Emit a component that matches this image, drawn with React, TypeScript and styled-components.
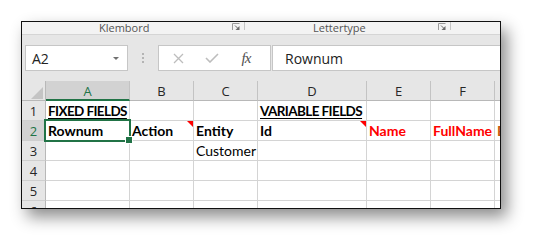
import * as React from 'react'
import styled, { createGlobalStyle } from 'styled-components'

const Global = createGlobalStyle`
  * {
    box-sizing: border-box;
  }
  body {
    margin: 0;
    padding: 0;
    background: #fff;
    font-family: "Open Sans", "Noto Sans", sans-serif;
  }
`

const green = '#217346'
const grid = '#d4d4d4'

const Page = styled.div`
  padding: 21px 0 0 21px;
  height: 251px;
`

const Window = styled.div`
  width: 480px;
  height: 188px;
  border: 1px solid #111;
  background: #e6e6e6;
  box-shadow: 6px 8px 15px rgba(0, 0, 0, 0.45);
  overflow: hidden;
  display: flex;
  flex-direction: column;
`

/* ribbon group labels, only the bottom strip is visible */
const RibbonStrip = styled.div`
  height: 13px;
  flex: none;
  display: flex;
  background: #f3f3f3;
  border-bottom: 1px solid #d5d5d5;
`

const Group = styled.div<{ $w: number; $labelAt: number }>`
  width: ${p => p.$w}px;
  flex: none;
  display: flex;
  align-items: flex-start;
  padding-left: ${p => p.$labelAt}px;
`

const GroupLabel = styled.span`
  font-size: 11px;
  line-height: 11px;
  color: #555;
  white-space: nowrap;
`

const Launcher = styled.svg`
  margin-left: auto;
  margin-top: 1px;
  flex: none;
`

const GroupSep = styled.div`
  width: 1px;
  height: 8px;
  background: #c6c6c6;
  margin-left: 4px;
  flex: none;
`

const FormulaBar = styled.div`
  height: 46px;
  flex: none;
  display: flex;
  align-items: center;
  padding-left: 3px;
`

const NameBox = styled.div`
  width: 103px;
  height: 26px;
  flex: none;
  background: #fff;
  border: 1px solid #c6c6c6;
  display: flex;
  align-items: center;
  padding: 0 8px 0 6px;
  font-size: 14px;
  color: #222;
`

const Caret = styled.span`
  margin-left: auto;
  width: 0;
  height: 0;
  border-left: 3px solid transparent;
  border-right: 3px solid transparent;
  border-top: 3px solid #707070;
`

const Grip = styled.div`
  width: 30px;
  flex: none;
  display: flex;
  flex-direction: column;
  align-items: center;
  gap: 2px;
  & > i {
    width: 2px;
    height: 2px;
    background: #b4b4b4;
  }
`

const FxBox = styled.div`
  width: 113px;
  height: 26px;
  flex: none;
  background: #fff;
  border: 1px solid #c6c6c6;
  display: flex;
  align-items: center;
  padding-left: 2px;
`

const FxSlot = styled.div`
  width: 34px;
  display: flex;
  justify-content: center;
  align-items: center;
`

const FxText = styled.span`
  font-family: "Liberation Serif", serif;
  font-style: italic;
  font-size: 15px;
  color: #505050;
  letter-spacing: -1px;
`

const FormulaInput = styled.div`
  flex: 1;
  height: 26px;
  margin-left: 1px;
  margin-right: -10px;
  background: #fff;
  border: 1px solid #c6c6c6;
  display: flex;
  align-items: center;
  padding-left: 12px;
  font-size: 14px;
  color: #222;
`

const Sheet = styled.div`
  flex: 1;
  background: #fff;
  overflow: hidden;
  display: grid;
  grid-template-columns: 24px 84px 64px 64px 109px 64px 64px 64px;
  grid-auto-rows: 20px;
`

const Corner = styled.div`
  background: #e6e6e6;
  border-right: 1px solid #b8b8b8;
  border-bottom: 1px solid #b8b8b8;
  display: flex;
  justify-content: flex-end;
  align-items: flex-end;
  padding: 0 2px 1px 0;
  & > i {
    width: 0;
    height: 0;
    border-left: 12px solid transparent;
    border-bottom: 12px solid #c4c4c4;
  }
`

const ColHeader = styled.div<{ $active?: boolean }>`
  background: ${p => (p.$active ? '#d2d2d2' : '#e6e6e6')};
  color: ${p => (p.$active ? green : '#262626')};
  border-right: 1px solid #c3c3c3;
  border-bottom: ${p => (p.$active ? `2px solid ${green}` : '1px solid #b8b8b8')};
  font-size: 13px;
  display: flex;
  align-items: center;
  justify-content: center;
  padding-top: ${p => (p.$active ? 1 : 0)}px;
`

const RowHeader = styled.div<{ $active?: boolean }>`
  background: ${p => (p.$active ? '#d2d2d2' : '#e6e6e6')};
  color: ${p => (p.$active ? green : '#262626')};
  border-right: 1px solid #b8b8b8;
  border-bottom: 1px solid #cfcfcf;
  font-size: 13px;
  display: flex;
  align-items: center;
  justify-content: center;
  padding-top: 1px;
`

const Cell = styled.div<{
  $bold?: boolean
  $under?: boolean
  $color?: string
  $comment?: boolean
}>`
  position: relative;
  border-right: 1px solid ${grid};
  border-bottom: 1px solid ${grid};
  font-family: Lato, "Open Sans", sans-serif;
  font-size: ${p => (p.$under ? 13.5 : 14)}px;
  letter-spacing: ${p => (p.$under ? -0.6 : 0)}px;
  line-height: 16px;
  font-weight: ${p => (p.$bold ? 700 : 400)};
  color: ${p => p.$color || '#000'};
  text-decoration: ${p => (p.$under ? 'underline' : 'none')};
  text-decoration-thickness: 1px;
  text-underline-offset: 2px;
  white-space: nowrap;
  overflow: ${p => (p.$under ? 'visible' : 'hidden')};
  display: flex;
  align-items: flex-end;
  padding: 0 2px 1px;
  &::after {
    content: '';
    display: ${p => (p.$comment ? 'block' : 'none')};
    position: absolute;
    top: 0;
    right: 0;
    border-top: 6px solid #f00;
    border-left: 6px solid transparent;
  }
`

const ActiveWrap = styled.div`
  position: relative;
`

const Selection = styled.div`
  position: absolute;
  left: -2px;
  top: -2px;
  right: -1px;
  bottom: -1px;
  border: 2px solid ${green};
  pointer-events: none;
  z-index: 2;
  &::after {
    content: '';
    position: absolute;
    right: -4px;
    bottom: -4px;
    width: 6px;
    height: 6px;
    background: ${green};
    border: 1px solid #fff;
  }
`

type CellData = {
  text?: string
  bold?: boolean
  under?: boolean
  color?: string
  comment?: boolean
}

const red = '#ff0000'

const rows: CellData[][] = [
  [
    { text: 'FIXED FIELDS', bold: true, under: true },
    {},
    {},
    { text: 'VARIABLE FIELDS', bold: true, under: true },
    {},
    {},
    {},
  ],
  [
    { text: 'Rownum', bold: true },
    { text: 'Action', bold: true, comment: true },
    { text: 'Entity', bold: true },
    { text: 'Id', bold: true, comment: true },
    { text: 'Name', bold: true, color: red },
    { text: 'FullName', bold: true, color: red },
    { text: 'Email', bold: true, color: '#c65911' },
  ],
  [{}, {}, { text: 'Customer' }, {}, {}, {}, {}],
  [{}, {}, {}, {}, {}, {}, {}],
  [{}, {}, {}, {}, {}, {}, {}],
  [{}, {}, {}, {}, {}, {}, {}],
]

// the G header letter falls outside the window, so it stays blank
const cols = ['A', 'B', 'C', 'D', 'E', 'F', '']

function DialogLauncher () {
  return (
    <Launcher width="8" height="7" viewBox="0 0 8 7">
      <path d="M0.5 7V0.5H7.5" fill="none" stroke="#9a9a9a" />
      <path d="M3 2.5L6 5.5" stroke="#6a6a6a" />
      <path d="M3.5 7H7.5V3Z" fill="#6a6a6a" />
    </Launcher>
  )
}

export default function App () {
  return (
    <Page>
      <Global />
      <Window>
        <RibbonStrip>
          <Group $w={223} $labelAt={77}>
            <GroupLabel>Klembord</GroupLabel>
            <DialogLauncher />
            <GroupSep />
          </Group>
          <Group $w={206} $labelAt={68}>
            <GroupLabel>Lettertype</GroupLabel>
            <DialogLauncher />
            <GroupSep />
          </Group>
        </RibbonStrip>

        <FormulaBar>
          <NameBox>
            A2
            <Caret />
          </NameBox>
          <Grip>
            <i />
            <i />
            <i />
          </Grip>
          <FxBox>
            <FxSlot>
              <svg width="11" height="11" viewBox="0 0 11 11">
                <path d="M1 1L10 10M10 1L1 10" stroke="#bdbdbd" strokeWidth="1.3" />
              </svg>
            </FxSlot>
            <FxSlot>
              <svg width="14" height="10" viewBox="0 0 14 10">
                <path d="M1 5L5 9L13 1" fill="none" stroke="#bdbdbd" strokeWidth="1.6" />
              </svg>
            </FxSlot>
            <FxSlot>
              <FxText>fx</FxText>
            </FxSlot>
          </FxBox>
          <FormulaInput>Rownum</FormulaInput>
        </FormulaBar>

        <Sheet>
          <Corner>
            <i />
          </Corner>
          {cols.map((c, i) => (
            <ColHeader key={i} $active={c === 'A'}>
              {c}
            </ColHeader>
          ))}
          {rows.map((row, r) => (
            <React.Fragment key={r}>
              <RowHeader $active={r === 1}>{r + 1}</RowHeader>
              {row.map((cell, c) => {
                const content = (
                  <Cell
                    key={c}
                    $bold={cell.bold}
                    $under={cell.under}
                    $color={cell.color}
                    $comment={cell.comment}
                  >
                    {cell.text}
                  </Cell>
                )
                if (r === 1 && c === 0) {
                  return (
                    <ActiveWrap key={c}>
                      {React.cloneElement(content, { style: { height: '100%' } })}
                      <Selection />
                    </ActiveWrap>
                  )
                }
                return content
              })}
            </React.Fragment>
          ))}
        </Sheet>
      </Window>
    </Page>
  )
}
